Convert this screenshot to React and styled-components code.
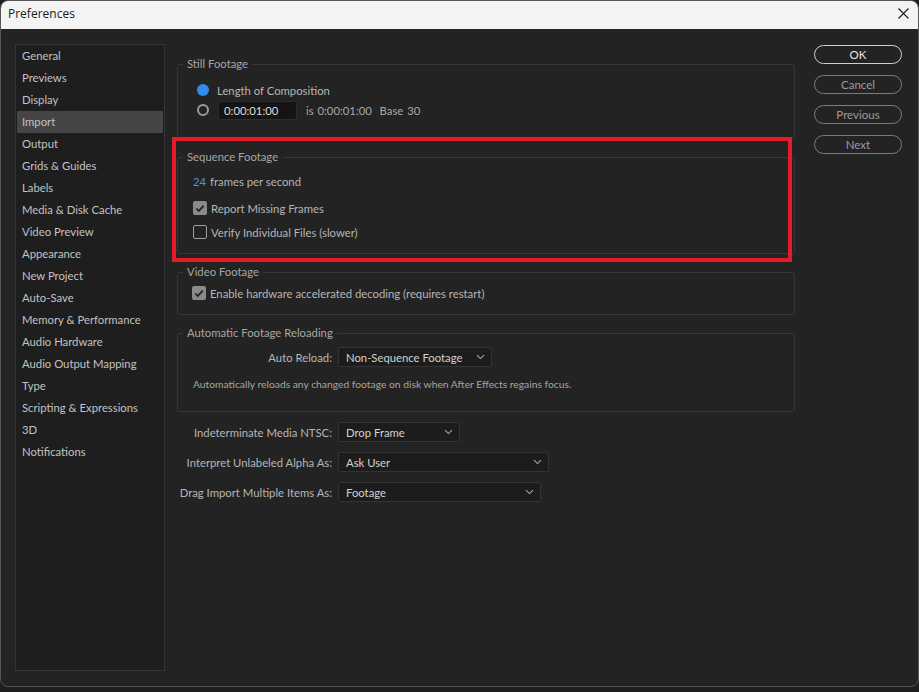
import React from "react";
import styled, { createGlobalStyle } from "styled-components";

const Global = createGlobalStyle`
  * { box-sizing: border-box; }
  html, body { margin: 0; padding: 0; background: #1f1f1f; }
  body { font-family: Lato, "Open Sans", sans-serif; font-size: 11.3px; }
`;

const Window = styled.div`
  width: 919px;
  height: 687px;
  border: 1px solid #555;
  border-radius: 8px;
  overflow: hidden;
  display: flex;
  flex-direction: column;
  background: #232323;
`;

const TitleBar = styled.div`
  height: 28px;
  flex: none;
  background: #f3f3f3;
  display: flex;
  align-items: center;
  justify-content: space-between;
  padding: 0 0 3px 7px;
`;

const Title = styled.span`
  font-family: "Open Sans", sans-serif;
  font-size: 12px;
  color: #1b1b1b;
`;

const CloseButton = styled.div`
  width: 30px;
  height: 25px;
  display: flex;
  align-items: center;
  justify-content: center;
`;

const Body = styled.div`
  flex: 1;
  display: flex;
  padding: 15px 16px 15px 14px;
`;

const Sidebar = styled.div`
  width: 150px;
  flex: none;
  background: #1e1e1e;
  border: 1px solid #353535;
  padding: 0 1px 1px;
  display: flex;
  flex-direction: column;
`;

const NavItem = styled.div`
  height: 22px;
  line-height: 22px;
  padding-left: 5px;
  color: #c2c2c2;
  background: ${(p) => (p.$active ? "#454545" : "transparent")};
  white-space: nowrap;
`;

const Main = styled.div`
  width: 618px;
  flex: none;
  margin-left: 12px;
  margin-top: 13px;
  display: flex;
  flex-direction: column;
  gap: 11px;
`;

const Fieldset = styled.fieldset`
  margin: 0;
  padding: 0;
  min-width: 0;
  border: 1px solid #363636;
  border-radius: 2px;
`;

const Legend = styled.legend`
  margin-left: 5px;
  padding: 0 4px;
  line-height: 14px;
  color: #a6a6a6;
`;

const GroupBody = styled.div`
  padding: ${(p) => p.$pad};
  display: flex;
  flex-direction: column;
`;

const Row = styled.div`
  height: 20px;
  display: flex;
  align-items: center;
  gap: ${(p) => p.$gap || "6px"};
  color: #b6b6b6;
  margin-top: ${(p) => p.$mt || "0px"};
`;

const Radio = styled.span`
  width: 12px;
  height: 12px;
  border-radius: 50%;
  flex: none;
  background: ${(p) => (p.$on ? "#2f8ceb" : "transparent")};
  border: ${(p) => (p.$on ? "none" : "2px solid #9a9a9a")};
`;

const TimeInput = styled.div`
  width: 79px;
  height: 19px;
  background: #141414;
  border: 1px solid #2c2c2c;
  border-radius: 2px;
  color: #dedede;
  padding-left: 5px;
  line-height: 17px;
  margin-left: 1px;
`;

const Muted = styled.span`
  color: #a8a8a8;
  margin-left: 1px;
  word-spacing: 1px;
`;

const Blue = styled.span`
  color: #4a90e2;
`;

const Box = styled.span`
  width: 14px;
  height: 14px;
  flex: none;
  border-radius: 2px;
  display: flex;
  align-items: center;
  justify-content: center;
  background: ${(p) => (p.$on ? "#8a8a8a" : "transparent")};
  border: ${(p) => (p.$on ? "none" : "1.5px solid #a0a0a0")};
`;

const Highlight = styled.div`
  position: absolute;
  left: -5px;
  top: -13px;
  width: 620px;
  height: 125px;
  border: 4.5px solid #e31d26;
  pointer-events: none;
`;

const Anchor = styled.div`
  position: relative;
`;

const FormRow = styled.div`
  display: flex;
  align-items: center;
  gap: 6px;
  height: 20px;
`;

const FormLabel = styled.span`
  width: ${(p) => p.$w}px;
  text-align: right;
  color: #b6b6b6;
  flex: none;
  white-space: nowrap;
`;

const Select = styled.div`
  width: ${(p) => p.$w}px;
  height: 20px;
  background: #1c1c1c;
  border: 1px solid #333;
  border-radius: 2px;
  display: flex;
  align-items: center;
  justify-content: space-between;
  padding: 0 6px 0 7px;
  color: #d2d2d2;
`;

const Desc = styled.div`
  color: #a6a6a6;
  font-size: 10.3px;
  line-height: 14px;
  padding-left: 15px;
  margin-top: 10px;
`;

const BottomForm = styled.div`
  display: flex;
  flex-direction: column;
  gap: 10px;
  margin-top: -1px;
`;

const Actions = styled.div`
  width: 88px;
  flex: none;
  margin-left: 19px;
  margin-top: 1px;
  display: flex;
  flex-direction: column;
  gap: 11px;
`;

const PillButton = styled.div`
  height: 19px;
  border-radius: 10px;
  border: 1px solid ${(p) => (p.$primary ? "#cfcfcf" : "#7c7c7c")};
  color: ${(p) => (p.$primary ? "#e6e6e6" : "#9c9c9c")};
  display: flex;
  align-items: center;
  justify-content: center;
  font-size: 11.5px;
`;

const Chevron = () => (
  <svg width="9" height="6" viewBox="0 0 9 6">
    <path d="M1 1.2 L4.5 4.6 L8 1.2" fill="none" stroke="#a8a8a8" strokeWidth="1.1" />
  </svg>
);

const Check = () => (
  <svg width="10" height="9" viewBox="0 0 10 9">
    <path d="M1.3 4.6 L3.9 7 L8.7 1.6" fill="none" stroke="#262626" strokeWidth="1.9" />
  </svg>
);

const navItems = [
  "General", "Previews", "Display", "Import", "Output", "Grids & Guides", "Labels",
  "Media & Disk Cache", "Video Preview", "Appearance", "New Project", "Auto-Save",
  "Memory & Performance", "Audio Hardware", "Audio Output Mapping", "Type",
  "Scripting & Expressions", "3D", "Notifications",
];

export default function App() {
  return (
    <>
      <Global />
      <Window>
        <TitleBar>
          <Title>Preferences</Title>
          <CloseButton>
            <svg width="11" height="11" viewBox="0 0 11 11">
              <path d="M0.5 0.5 L10.5 10.5 M10.5 0.5 L0.5 10.5" stroke="#1b1b1b" strokeWidth="1.1" />
            </svg>
          </CloseButton>
        </TitleBar>
        <Body>
          <Sidebar>
            {navItems.map((n) => (
              <NavItem key={n} $active={n === "Import"}>{n}</NavItem>
            ))}
          </Sidebar>
          <Main>
            <Fieldset>
              <Legend>Still Footage</Legend>
              <GroupBody $pad="9px 0 18px 19px">
                <Row $gap="8px"><Radio $on />Length of Composition</Row>
                <Row $gap="8px">
                  <Radio />
                  <TimeInput>0:00:01:00</TimeInput>
                  <Muted>is 0:00:01:00&nbsp; Base 30</Muted>
                </Row>
              </GroupBody>
            </Fieldset>

            <Anchor>
              <Fieldset>
                <Legend>Sequence Footage</Legend>
                <GroupBody $pad="7px 0 11px 15px">
                  <Row $gap="4px"><Blue>24</Blue>frames per second</Row>
                  <Row $mt="7px" $gap="4px">
                    <Box $on><Check /></Box>Report Missing Frames
                  </Row>
                  <Row $mt="4px" $gap="4px">
                    <Box />Verify Individual Files (slower)
                  </Row>
                </GroupBody>
              </Fieldset>
              <Highlight />
            </Anchor>

            <Fieldset>
              <Legend>Video Footage</Legend>
              <GroupBody $pad="4px 0 11px 14px">
                <Row $gap="4px">
                  <Box $on><Check /></Box>Enable hardware accelerated decoding (requires restart)
                </Row>
              </GroupBody>
            </Fieldset>

            <Fieldset>
              <Legend>Automatic Footage Reloading</Legend>
              <GroupBody $pad="7px 0 20px 0">
                <FormRow>
                  <FormLabel $w={154}>Auto Reload:</FormLabel>
                  <Select $w={154}>Non-Sequence Footage<Chevron /></Select>
                </FormRow>
                <Desc>Automatically reloads any changed footage on disk when After Effects regains focus.</Desc>
              </GroupBody>
            </Fieldset>

            <BottomForm>
              <FormRow>
                <FormLabel $w={155}>Indeterminate Media NTSC:</FormLabel>
                <Select $w={122}>Drop Frame<Chevron /></Select>
              </FormRow>
              <FormRow>
                <FormLabel $w={155}>Interpret Unlabeled Alpha As:</FormLabel>
                <Select $w={211}>Ask User<Chevron /></Select>
              </FormRow>
              <FormRow>
                <FormLabel $w={155}>Drag Import Multiple Items As:</FormLabel>
                <Select $w={203}>Footage<Chevron /></Select>
              </FormRow>
            </BottomForm>
          </Main>
          <Actions>
            <PillButton $primary>OK</PillButton>
            <PillButton>Cancel</PillButton>
            <PillButton>Previous</PillButton>
            <PillButton>Next</PillButton>
          </Actions>
        </Body>
      </Window>
    </>
  );
}
